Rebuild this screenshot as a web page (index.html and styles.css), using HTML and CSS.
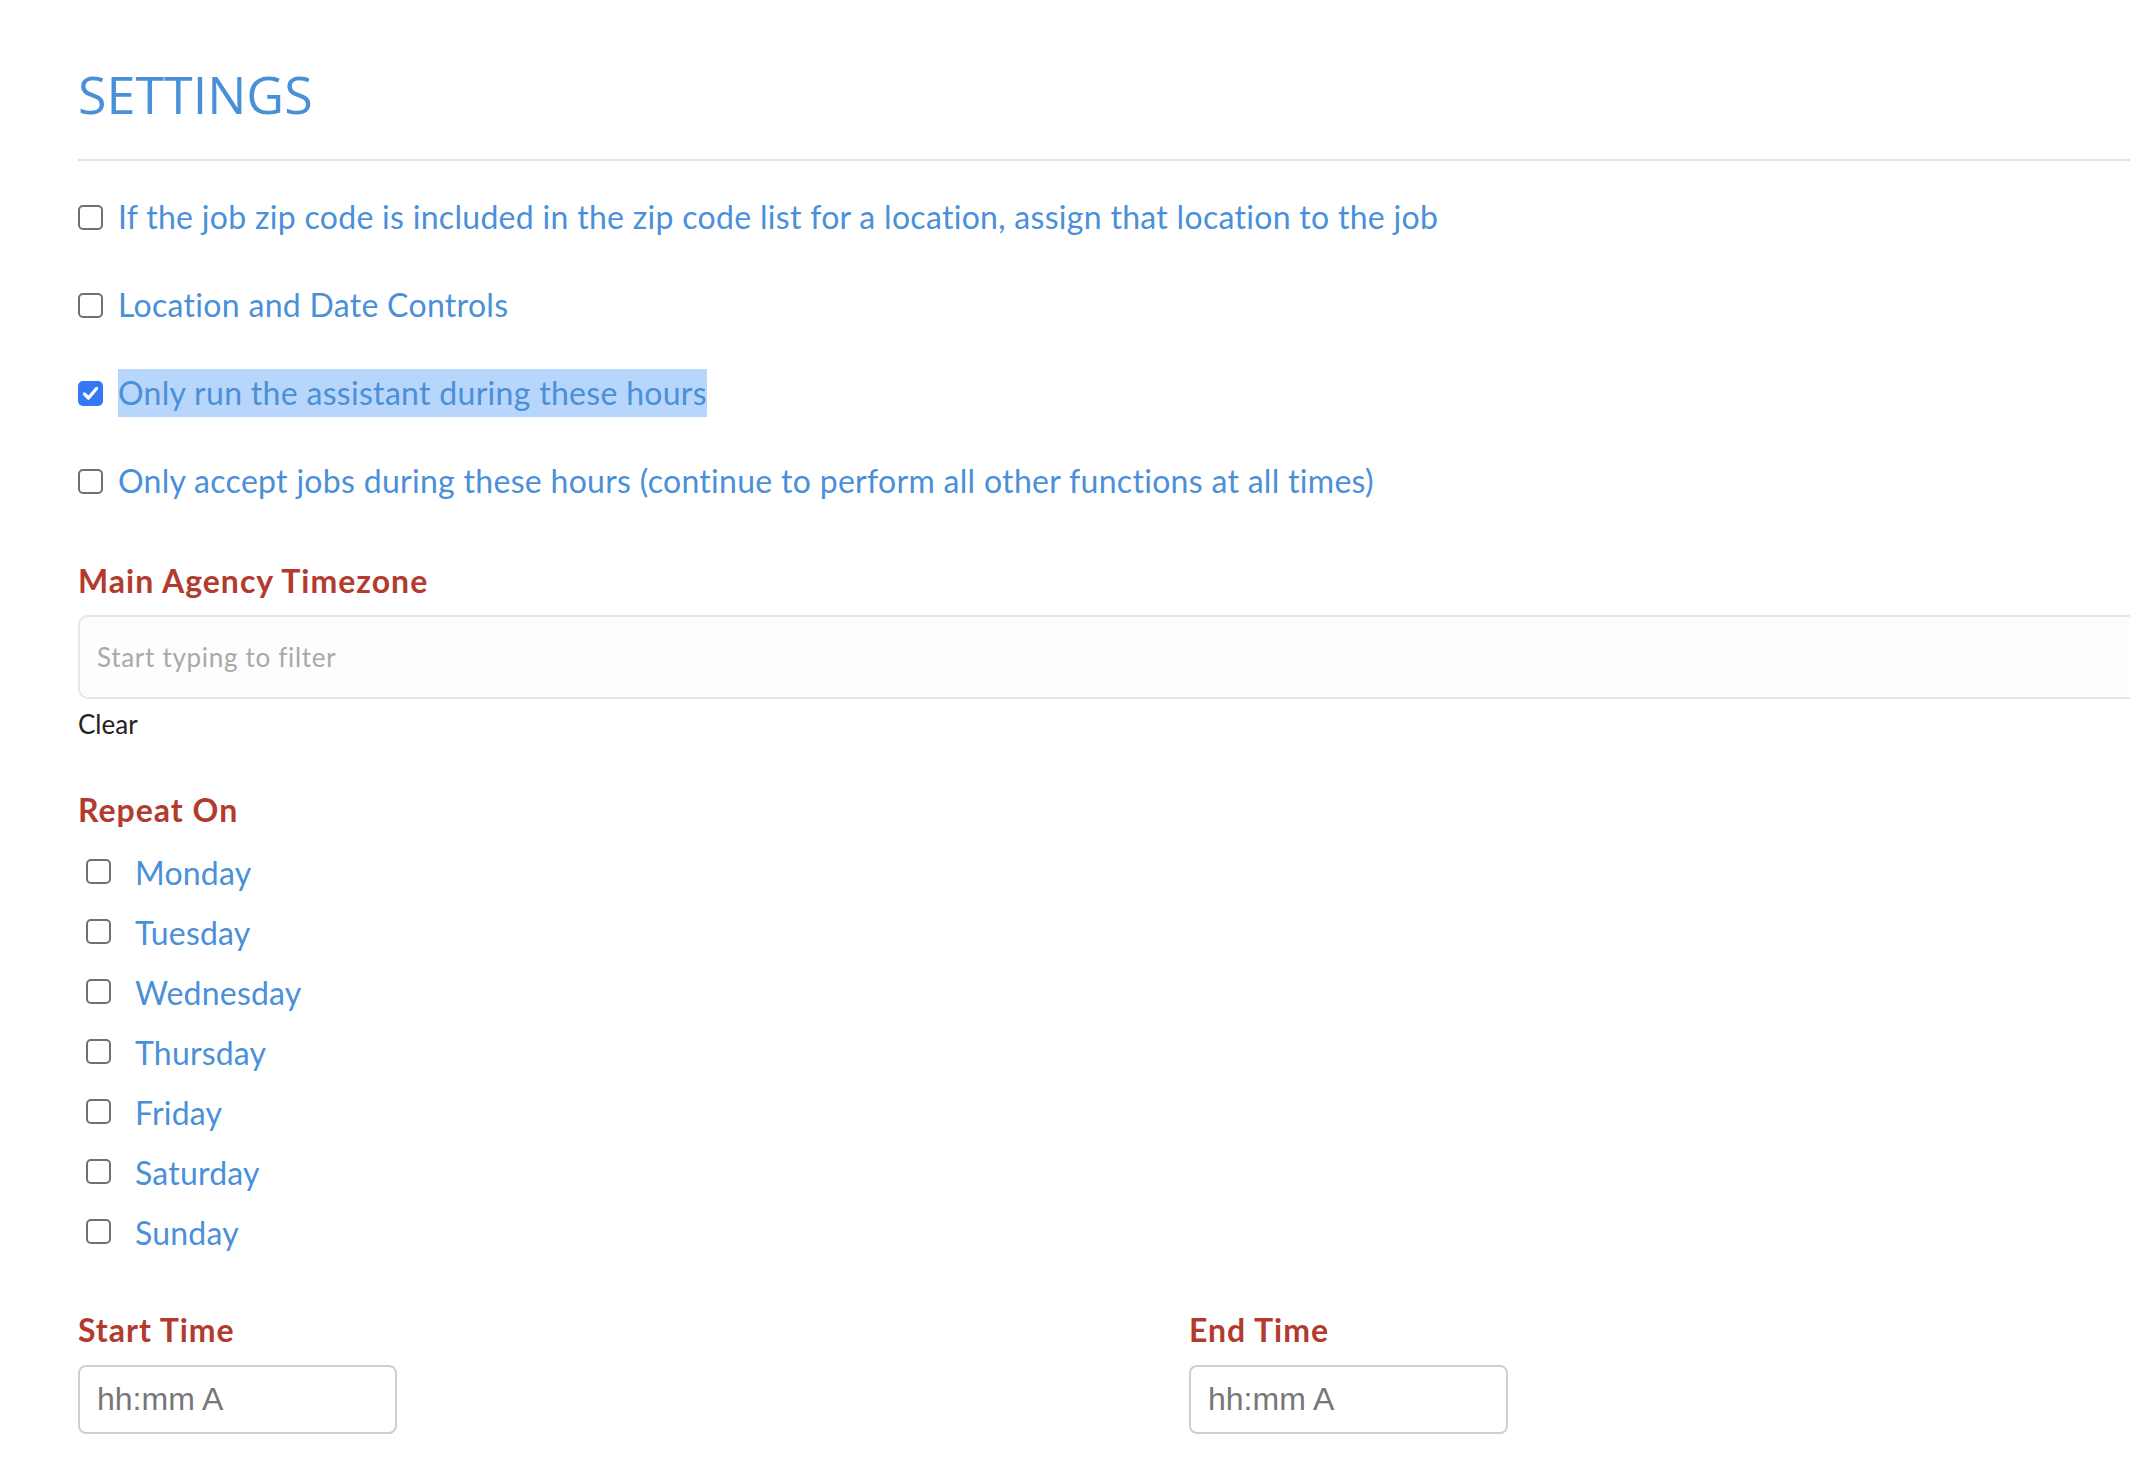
FILE: index.html
```html
<!DOCTYPE html>
<html lang="en">

<head>
    <meta charset="UTF-8">
    <meta name="viewport" content="width=device-width, initial-scale=1.0">
    <title>Settings</title>
    <link rel="stylesheet" href="styles.css">
</head>

<body>
    <div class="page">
        <h2 class="title">SETTINGS</h2>
        <hr class="rule">

        <div class="options">
            <label class="opt">
                <span class="box"></span>
                <span class="opt-text">If the job zip code is included in the zip code list for a location, assign that location to the job</span>
            </label>
            <label class="opt">
                <span class="box"></span>
                <span class="opt-text">Location and Date Controls</span>
            </label>
            <label class="opt">
                <span class="box checked">
                    <svg width="25" height="25" viewBox="0 0 25 25">
                        <path d="M6.5 13 L10.5 17 L18.5 7.5" fill="none" stroke="#fff" stroke-width="3.4" stroke-linecap="round" stroke-linejoin="round"/>
                    </svg>
                </span>
                <span class="opt-text selected">Only run the assistant during these hours</span>
            </label>
            <label class="opt">
                <span class="box"></span>
                <span class="opt-text">Only accept jobs during these hours (continue to perform all other functions at all times)</span>
            </label>
        </div>

        <!-- timezone -->
        <div class="field tz">
            <h4 class="field-label">Main Agency Timezone</h4>
            <input class="filter" type="text" placeholder="Start typing to filter">
            <a class="clear">Clear</a>
        </div>

        <!-- days -->
        <div class="field repeat">
            <h4 class="field-label">Repeat On</h4>
            <div class="days">
                <label class="day"><span class="box"></span><span class="day-text">Monday</span></label>
                <label class="day"><span class="box"></span><span class="day-text">Tuesday</span></label>
                <label class="day"><span class="box"></span><span class="day-text">Wednesday</span></label>
                <label class="day"><span class="box"></span><span class="day-text">Thursday</span></label>
                <label class="day"><span class="box"></span><span class="day-text">Friday</span></label>
                <label class="day"><span class="box"></span><span class="day-text">Saturday</span></label>
                <label class="day"><span class="box"></span><span class="day-text">Sunday</span></label>
            </div>
        </div>

        <div class="times">
            <div class="time-col">
                <h4 class="field-label">Start Time</h4>
                <input class="time" type="text" placeholder="hh:mm A">
            </div>
            <div class="time-col">
                <h4 class="field-label">End Time</h4>
                <input class="time" type="text" placeholder="hh:mm A">
            </div>
        </div>
    </div>
</body>

</html>
```
FILE: styles.css
```css
html,
body {
    margin: 0;
    overflow: hidden;
    background: #fff;
}

body {
    font-family: Lato, "Open Sans", sans-serif;
}

.page {
    width: 2222px;
    padding-left: 78px;
}

.title {
    margin: 62px 0 0;
    font-family: "Open Sans", sans-serif;
    font-weight: 400;
    font-size: 52px;
    line-height: 64px;
    color: #4a90d9;
}

.rule {
    margin: 33px 0 0;
    border: 0;
    height: 2px;
    background: #e3e3e3;
}

.options {
    margin-top: 32px;
    display: flex;
    flex-direction: column;
    gap: 40px;
}

.opt {
    display: flex;
    align-items: center;
    gap: 15px;
    height: 48px;
}

.opt-text {
    font-size: 32px;
    line-height: 48px;
    letter-spacing: 0.3px;
    color: #4a90d9;
}

.opt-text.selected {
    background: #b8d6fb;
}

.box {
    width: 25px;
    height: 25px;
    box-sizing: border-box;
    border: 2px solid #707070;
    border-radius: 5px;
    flex-shrink: 0;
}

.box.checked {
    border: 0;
    background: #3478f6;
}

.box svg {
    display: block;
}

.field-label {
    margin: 0;
    font-size: 32px;
    font-weight: 700;
    line-height: 40px;
    letter-spacing: 1px;
    color: #b23b2e;
}

.tz {
    margin-top: 56px;
}

.filter {
    display: block;
    box-sizing: border-box;
    width: 100%;
    height: 84px;
    margin-top: 14px;
    padding: 0 17px;
    border: 2px solid #e6e6e6;
    border-radius: 10px;
    background: #fdfdfd;
    font-family: Lato, sans-serif;
    font-size: 26px;
    letter-spacing: 0.7px;
    outline: none;
}

.filter::placeholder {
    color: #a9a9a9;
}

.clear {
    display: block;
    margin-top: 9px;
    font-size: 26px;
    line-height: 32px;
    color: #222;
}

.repeat {
    margin-top: 50px;
}

.days {
    margin-top: 19px;
    display: flex;
    flex-direction: column;
    gap: 12px;
}

.day {
    display: flex;
    align-items: center;
    gap: 24px;
    height: 48px;
    padding-left: 8px;
}

.day .box {
    margin-top: -4px;
}

.day-text {
    font-size: 32px;
    line-height: 48px;
    letter-spacing: 0.2px;
    color: #4a90d9;
}

.times {
    margin-top: 53px;
    display: grid;
    grid-template-columns: 1111px 1111px;
}

.time {
    display: block;
    box-sizing: border-box;
    width: 319px;
    height: 69px;
    margin-top: 15px;
    padding: 0 17px;
    border: 2px solid #cfcfcf;
    border-radius: 8px;
    font-family: "Liberation Sans", Arial, sans-serif;
    font-size: 32px;
    outline: none;
}

.time::placeholder {
    color: #777;
}
```
